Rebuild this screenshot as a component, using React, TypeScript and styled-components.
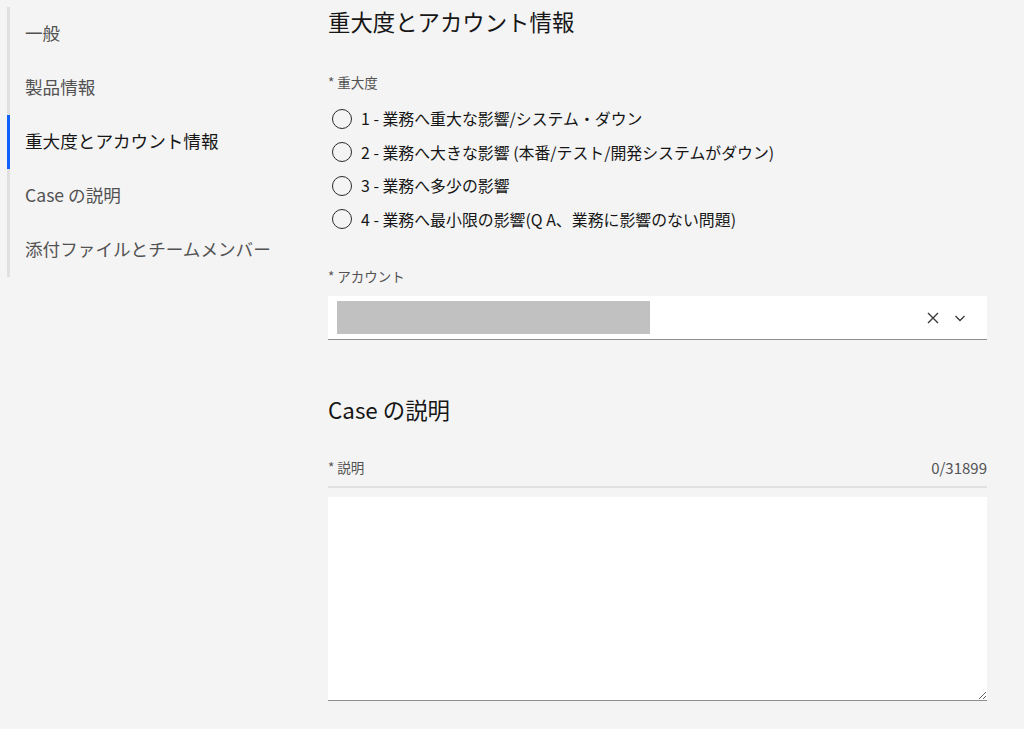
import React from 'react'
import styled, { createGlobalStyle } from 'styled-components'

const GlobalStyle = createGlobalStyle`
  body {
    margin: 0;
    background: #f4f4f4;
    font-family: "Noto Sans CJK JP", "Noto Sans", sans-serif;
    color: #161616;
  }
`

const Page = styled.div`
  display: flex;
  padding: 7px 0 0 7px;
  min-height: 722px;
`

const SideNav = styled.nav`
  width: 318px;
  flex-shrink: 0;
  align-self: flex-start;
  border-left: 3px solid #e0e0e0;
  display: flex;
  flex-direction: column;
`

const NavItem = styled.div<{ $active?: boolean }>`
  height: 54px;
  box-sizing: border-box;
  display: flex;
  align-items: center;
  margin-left: -3px;
  padding: 0 0 3px 15px;
  border-left: 3px solid ${p => (p.$active ? '#0f62fe' : 'transparent')};
  font-size: 17.6px;
  color: ${p => (p.$active ? '#161616' : '#525252')};
  white-space: nowrap;
`

const Main = styled.main`
  width: 659px;
  display: flex;
  flex-direction: column;
`

const SectionTitle = styled.h2<{ $gap?: number }>`
  margin: ${p => p.$gap ?? 0}px 0 0;
  font-size: 22.4px;
  line-height: 28px;
  font-weight: 400;
  color: #161616;
`

const FieldLabel = styled.div<{ $gap: number }>`
  margin-top: ${p => p.$gap}px;
  font-size: 13.5px;
  line-height: 16px;
  color: #525252;
`

const RadioGroup = styled.div`
  margin-top: 12px;
  display: flex;
  flex-direction: column;
`

const RadioRow = styled.label`
  height: 33.5px;
  display: flex;
  align-items: center;
  gap: 9px;
  font-size: 15.9px;
  color: #161616;
  white-space: nowrap;
`

const RadioCircle = styled.span`
  width: 20px;
  height: 20px;
  margin-left: 4px;
  box-sizing: border-box;
  border: 1.5px solid #2a2a2a;
  border-radius: 50%;
  flex-shrink: 0;
`

const Select = styled.div`
  margin-top: 12px;
  height: 44px;
  box-sizing: border-box;
  background: #fff;
  border-bottom: 1px solid #8d8d8d;
  display: flex;
  align-items: center;
  padding: 0 21px 0 9px;
`

const Masked = styled.div`
  width: 313px;
  height: 33px;
  background: #c1c1c1;
`

const SelectIcons = styled.div`
  margin-left: auto;
  display: flex;
  align-items: center;
  gap: 15px;
  color: #393939;
`

const FieldHeader = styled.div`
  margin-top: 36px;
  display: flex;
  justify-content: space-between;
  align-items: center;
  height: 16px;
  font-size: 13.5px;
  color: #525252;
`

const Counter = styled.span`
  font-size: 15px;
`

const Divider = styled.div`
  margin-top: 11px;
  height: 2px;
  background: #e0e0e0;
`

const TextArea = styled.textarea`
  margin-top: 9px;
  height: 204px;
  box-sizing: border-box;
  border: none;
  border-bottom: 1px solid #8d8d8d;
  background: #fff;
  resize: vertical;
  font-family: inherit;
  font-size: 14px;
  padding: 10px;
  outline: none;
`

const navItems = ['一般', '製品情報', '重大度とアカウント情報', 'Case の説明', '添付ファイルとチームメンバー']

const severities = [
  '1 - 業務へ重大な影響/システム・ダウン',
  '2 - 業務へ大きな影響 (本番/テスト/開発システムがダウン)',
  '3 - 業務へ多少の影響',
  '4 - 業務へ最小限の影響(Q A、業務に影響のない問題)',
]

const App: React.FC = () => {
  return (
    <>
      <GlobalStyle />
      <Page>
        <SideNav>
          {navItems.map((item, i) => (
            <NavItem key={item} $active={i === 2}>{item}</NavItem>
          ))}
        </SideNav>
        <Main>
          <SectionTitle>重大度とアカウント情報</SectionTitle>
          <FieldLabel $gap={39}>* 重大度</FieldLabel>
          <RadioGroup>
            {severities.map(s => (
              <RadioRow key={s}>
                <RadioCircle />
                {s}
              </RadioRow>
            ))}
          </RadioGroup>
          <FieldLabel $gap={32}>* アカウント</FieldLabel>
          <Select>
            <Masked />
            <SelectIcons>
              <svg width="12" height="12" viewBox="0 0 12 12" fill="none" stroke="currentColor" strokeWidth="1.4">
                <path d="M1 1l10 10M11 1L1 11" />
              </svg>
              <svg width="12" height="8" viewBox="0 0 12 8" fill="none" stroke="currentColor" strokeWidth="1.3">
                <path d="M1.5 2l4.5 4.5L10.5 2" />
              </svg>
            </SelectIcons>
          </Select>
          <SectionTitle $gap={55}>Case の説明</SectionTitle>
          <FieldHeader>
            <span>* 説明</span>
            <Counter>0/31899</Counter>
          </FieldHeader>
          <Divider />
          <TextArea />
        </Main>
      </Page>
    </>
  )
}

export default App
